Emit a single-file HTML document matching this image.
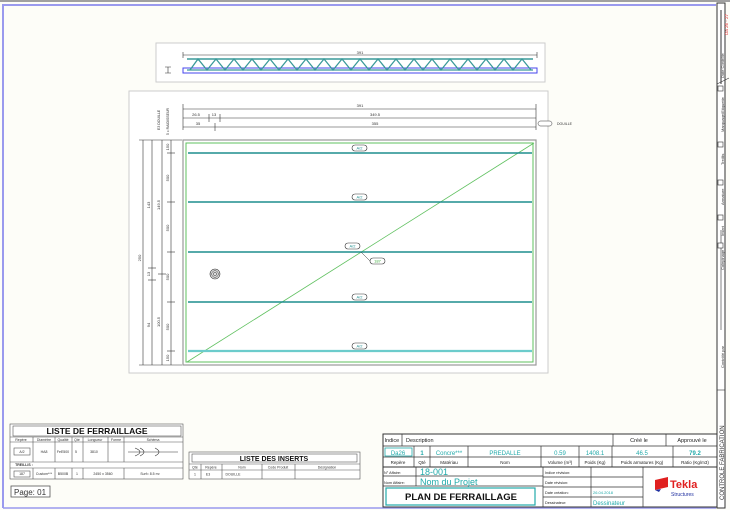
<!DOCTYPE html>
<html><head><meta charset="utf-8"><style>
html,body{margin:0;padding:0;background:#fdfdf8;}
svg{display:block;font-family:"Liberation Sans",sans-serif;}
</style></head><body>
<svg width="730" height="510" viewBox="0 0 730 510" xmlns="http://www.w3.org/2000/svg">
<rect x="0" y="0" width="730" height="510" fill="#fdfdf8"/>
<rect x="0" y="0" width="730" height="2" fill="#a0a0a0"/>
<!-- page frame -->
<path d="M3 508 V5 H716" fill="none" stroke="#9a9aee" stroke-width="2"/>
<line x1="3" y1="508" x2="716" y2="508" stroke="#9a9aee" stroke-width="1.5"/>
<!-- right strip -->
<rect x="717" y="3" width="8" height="505" fill="#fff" stroke="#333" stroke-width="1"/>
<line x1="721" y1="10" x2="721" y2="84" stroke="#999" stroke-width="2"/>
<line x1="721" y1="230" x2="721" y2="330" stroke="#aaa" stroke-width="1.5"/>
<line x1="717" y1="84" x2="729" y2="78" stroke="#333" stroke-width="0.6"/>
<text transform="translate(728,35) rotate(-90)" font-size="4.5" fill="#e03030">Da 26 - 27</text>
<g font-size="4" fill="#333">
<text transform="translate(724,78) rotate(-90)">Date Contrôle</text>
<text transform="translate(724,132) rotate(-90)">Marquage/Etiquette</text>
<text transform="translate(724,165) rotate(-90)">Treillis</text>
<text transform="translate(724,205) rotate(-90)">Armature</text>
<text transform="translate(724,236) rotate(-90)">Insert</text>
<text transform="translate(724,270) rotate(-90)">Calepinage</text>
<text transform="translate(724,368) rotate(-90)">Contrôlé par</text>
<text transform="translate(724,500) rotate(-90)" font-size="6">CONTROLE FABRICATION</text>
</g>
<g fill="#fff" stroke="#333" stroke-width="0.6">
<rect x="718" y="86" width="5" height="5"/><rect x="718" y="142" width="5" height="5"/><rect x="718" y="180" width="5" height="5"/><rect x="718" y="215" width="5" height="5"/><rect x="718" y="243" width="5" height="5"/>
</g>
<line x1="717" y1="390" x2="725" y2="390" stroke="#333" stroke-width="0.6"/>

<!-- top truss panel -->
<rect x="156" y="43" width="389" height="39" fill="#fff" stroke="#ccc" stroke-width="1"/>
<line x1="183" y1="55" x2="537" y2="55" stroke="#333" stroke-width="0.6"/>
<line x1="183" y1="52" x2="183" y2="58" stroke="#333" stroke-width="0.6"/>
<line x1="537" y1="52" x2="537" y2="58" stroke="#333" stroke-width="0.6"/>
<text x="360" y="54" font-size="4" text-anchor="middle" fill="#333">391</text>
<rect x="183" y="68" width="354" height="5" fill="none" stroke="#4444ee" stroke-width="1"/>
<line x1="187" y1="59" x2="533" y2="59" stroke="#3a9a9a" stroke-width="1.5"/>
<line x1="187" y1="70" x2="533" y2="70" stroke="#3a9a9a" stroke-width="1.2"/>
<path d="M190 70 L198 59 L207 70 L216 59 L225 70 L234 59 L243 70 L252 59 L261 70 L270 59 L279 70 L288 59 L297 70 L306 59 L315 70 L324 59 L333 70 L342 59 L351 70 L360 59 L369 70 L378 59 L387 70 L396 59 L405 70 L414 59 L423 70 L432 59 L441 70 L450 59 L459 70 L468 59 L477 70 L486 59 L495 70 L504 59 L513 70 L522 59 L531 70" fill="none" stroke="#3a9a9a" stroke-width="1.3"/>
<path d="M165 67 H171 M168 67 V73 M165 73 H171" stroke="#333" stroke-width="0.6" fill="none"/>

<!-- main panel -->
<rect x="129" y="91" width="419" height="282" fill="#fff" stroke="#ccc" stroke-width="1"/>
<g stroke="#333" stroke-width="0.6" fill="none">
<line x1="183" y1="109" x2="536" y2="109"/>
<line x1="183" y1="118" x2="536" y2="118"/>
<line x1="183" y1="127" x2="536" y2="127"/>
<line x1="183" y1="104" x2="183" y2="130"/>
<line x1="536" y1="104" x2="536" y2="130"/>
<line x1="209" y1="114" x2="209" y2="122"/>
<line x1="220" y1="114" x2="220" y2="122"/>
<line x1="215" y1="123" x2="215" y2="131"/>
<line x1="143" y1="140" x2="143" y2="365"/>
<line x1="152" y1="140" x2="152" y2="365"/>
<line x1="162" y1="140" x2="162" y2="365"/>
<line x1="171" y1="140" x2="171" y2="365"/>
<line x1="139" y1="140" x2="182" y2="140"/>
<line x1="139" y1="365" x2="182" y2="365"/>
<line x1="148" y1="268" x2="156" y2="268"/>
<line x1="148" y1="280" x2="156" y2="280"/>
<line x1="158" y1="274" x2="166" y2="274"/>
<line x1="167" y1="153" x2="175" y2="153"/>
<line x1="167" y1="202" x2="175" y2="202"/>
<line x1="167" y1="252" x2="175" y2="252"/>
<line x1="167" y1="302" x2="175" y2="302"/>
<line x1="167" y1="351" x2="175" y2="351"/>
</g>
<g font-size="4" fill="#333">
<text x="360" y="107" text-anchor="middle">391</text>
<text x="196" y="116" text-anchor="middle">26.5</text>
<text x="214" y="116" text-anchor="middle">13</text>
<text x="375" y="116" text-anchor="middle">349.5</text>
<text x="198" y="125" text-anchor="middle">35</text>
<text x="375" y="125" text-anchor="middle">355</text>
<text transform="translate(141,258) rotate(-90)" text-anchor="middle">250</text>
<text transform="translate(150,205) rotate(-90)" text-anchor="middle">143</text>
<text transform="translate(150,325) rotate(-90)" text-anchor="middle">94</text>
<text transform="translate(150,274) rotate(-90)" text-anchor="middle">13</text>
<text transform="translate(160,205) rotate(-90)" text-anchor="middle">149.5</text>
<text transform="translate(160,322) rotate(-90)" text-anchor="middle">100.5</text>
<text transform="translate(169,147) rotate(-90)" text-anchor="middle">150</text>
<text transform="translate(169,178) rotate(-90)" text-anchor="middle">500</text>
<text transform="translate(169,228) rotate(-90)" text-anchor="middle">500</text>
<text transform="translate(169,277) rotate(-90)" text-anchor="middle">500</text>
<text transform="translate(169,327) rotate(-90)" text-anchor="middle">500</text>
<text transform="translate(169,358) rotate(-90)" text-anchor="middle">150</text>
<text transform="translate(169,135) rotate(-90)" font-size="3.5">5 x RAIDISSEUR</text>
<text transform="translate(160,130) rotate(-90)" font-size="3.5">E3 DOUILLE</text>
</g>
<rect x="538" y="121" width="14" height="5" rx="2.5" fill="#fff" stroke="#333" stroke-width="0.5"/>
<text x="557" y="125" font-size="3.5" fill="#333">DOUILLE</text>
<!-- slab -->
<rect x="183" y="140" width="353" height="225" fill="#fff" stroke="#999" stroke-width="1.2"/>
<rect x="186" y="143" width="347" height="219" fill="none" stroke="#5fc05f" stroke-width="1"/>
<line x1="187" y1="362" x2="534" y2="143" stroke="#5fc05f" stroke-width="0.8"/>
<g stroke="#1e8e8e" stroke-width="1.4">
<line x1="188" y1="153" x2="532" y2="153"/>
<line x1="188" y1="202" x2="532" y2="202"/>
<line x1="188" y1="252" x2="532" y2="252"/>
<line x1="188" y1="302" x2="532" y2="302"/>
<line x1="188" y1="351" x2="532" y2="351" stroke="#6ccccc" stroke-width="2.2"/>
</g>
<g fill="#fff" stroke="#333" stroke-width="0.6">
<rect x="352" y="145" width="15" height="6" rx="3"/>
<rect x="352" y="194" width="15" height="6" rx="3"/>
<rect x="345" y="243" width="15" height="6" rx="3"/>
<rect x="352" y="294" width="15" height="6" rx="3"/>
<rect x="352" y="343" width="15" height="6" rx="3"/>
<rect x="370" y="258" width="15" height="6" rx="3"/>
</g>
<line x1="361" y1="252" x2="370" y2="261" stroke="#333" stroke-width="0.5"/>
<g font-size="4" fill="#1e8e8e" text-anchor="middle">
<text x="359.5" y="149.5">A/2</text><text x="359.5" y="198.5">A/2</text><text x="352.5" y="247.5">A/2</text><text x="359.5" y="298.5">A/2</text><text x="359.5" y="347.5">A/2</text>
<text x="377.5" y="262.5" fill="#3aaa3a">187</text>
</g>
<circle cx="215" cy="274" r="5" fill="#ddd" stroke="#333" stroke-width="0.6"/>
<circle cx="215" cy="274" r="3.3" fill="none" stroke="#333" stroke-width="0.5"/>
<circle cx="215" cy="274" r="1.6" fill="none" stroke="#333" stroke-width="0.5"/>

<!-- LISTE DE FERRAILLAGE -->
<g stroke="#555" stroke-width="0.6" fill="none">
<rect x="10" y="424" width="173" height="55" fill="#fff"/>
<rect x="13" y="426" width="168" height="10"/>
<line x1="10" y1="437" x2="183" y2="437"/>
<line x1="10" y1="442" x2="183" y2="442"/>
<line x1="10" y1="462" x2="183" y2="462"/>
<line x1="10" y1="468" x2="183" y2="468"/>
<path d="M33 437 V462 M55 437 V462 M72 437 V462 M83 437 V462 M108 437 V462 M124 437 V462 M33 468 V479 M55 468 V479 M72 468 V479 M83 468 V479 M124 468 V479"/>
<rect x="14" y="448" width="16" height="7"/>
<rect x="14" y="471" width="16" height="6"/>
<path d="M128 452 H178 M140 448 Q148 452 140 456 M155 448 Q163 452 155 456 M135 448 Q145 452 135 456" stroke="#333"/>
</g>
<text x="97" y="434" font-size="8.5" font-weight="bold" text-anchor="middle" fill="#111">LISTE DE FERRAILLAGE</text>
<g font-size="3.5" fill="#333" text-anchor="middle">
<text x="21" y="441">Repère</text><text x="44" y="441">Diamètre</text><text x="63" y="441">Qualité</text><text x="77" y="441">Qté</text><text x="95" y="441">Longueur</text><text x="116" y="441">Forme</text><text x="153" y="441">Schéma</text>
<text x="22" y="453">A/2</text><text x="44" y="453">HA8</text><text x="63" y="453">FeE500</text><text x="76" y="453">5</text><text x="94" y="453">3810</text>
<text x="24" y="466" font-weight="bold">TREILLIS :</text>
<text x="22" y="475">187</text><text x="44" y="475">Custom***</text><text x="63" y="475">B500B</text><text x="77" y="475">1</text><text x="103" y="475">2450  x  3560</text><text x="150" y="475">Surf=     8.5  m²</text>
</g>
<rect x="11" y="486" width="39" height="11" fill="#fff" stroke="#555" stroke-width="0.8"/>
<text x="14" y="495" font-size="8" fill="#333">Page:  01</text>

<!-- LISTE DES INSERTS -->
<g stroke="#555" stroke-width="0.6" fill="none">
<rect x="189" y="452" width="171" height="27" fill="#fff"/>
<rect x="192" y="454" width="165" height="8"/>
<line x1="189" y1="464" x2="360" y2="464"/>
<line x1="189" y1="470" x2="360" y2="470"/>
<path d="M201 464 V479 M222 464 V479 M262 464 V479 M295 464 V479"/>
</g>
<text x="274" y="461" font-size="7" font-weight="bold" text-anchor="middle" fill="#111">LISTE DES INSERTS</text>
<g font-size="3.5" fill="#333" text-anchor="middle">
<text x="195" y="468.5">Qté</text><text x="211" y="468.5">Repère</text><text x="242" y="468.5">Nom</text><text x="278" y="468.5">Code Produit</text><text x="327" y="468.5">Désignation</text>
<text x="195" y="475.5">1</text><text x="208" y="475.5">E3</text><text x="233" y="475.5">DOUILLE</text>
</g>

<!-- title block -->
<rect x="383" y="434" width="334" height="73" fill="#fff" stroke="#333" stroke-width="1"/>
<g stroke="#333" stroke-width="0.7" fill="none">
<line x1="383" y1="446" x2="717" y2="446"/>
<line x1="383" y1="457" x2="717" y2="457"/>
<line x1="383" y1="467" x2="717" y2="467" stroke-width="1"/>
<path d="M402 434 V446 M613 434 V446 M666 434 V446"/>
<path d="M414 446 V467 M430 446 V467 M468 446 V467 M541 446 V467 M579 446 V467 M612 446 V467 M673 446 V467"/>
<path d="M543 467 V507 M643 467 V507 M591 467 V507"/>
<path d="M543 477 H643 M543 487 H643 M543 497 H643"/>
<path d="M383 476 H543 M383 486 H543"/>
<path d="M416 467 V486"/>
</g>
<rect x="385" y="448" width="27" height="8" fill="none" stroke="#2aa" stroke-width="0.8"/>
<rect x="386" y="488" width="149" height="17" fill="none" stroke="#2aa" stroke-width="1.2"/>
<g font-size="5.5" fill="#222">
<text x="384.5" y="442">Indice</text><text x="406" y="442">Description</text>
<text x="639" y="442" text-anchor="middle">Créé le</text><text x="692" y="442" text-anchor="middle">Approuvé le</text>
</g>
<g font-size="6" fill="#2aa" text-anchor="middle">
<text x="398" y="455">Da26</text><text x="422" y="455" font-weight="bold">1</text><text x="449" y="455">Concre***</text><text x="505" y="455">PREDALLE</text><text x="560" y="455">0.59</text><text x="595" y="455">1408.1</text><text x="642" y="455">46.5</text><text x="695" y="455" font-weight="bold">79.2</text>
</g>
<g font-size="4.5" fill="#222" text-anchor="middle">
<text x="398" y="464">Repère</text><text x="422" y="464">Qté</text><text x="449" y="464">Matériau</text><text x="505" y="464">Nom</text><text x="560" y="464">Volume (m³)</text><text x="595" y="464">Poids (Kg)</text><text x="642" y="464">Poids armatures (Kg)</text><text x="695" y="464">Ratio (Kg/m3)</text>
</g>
<g font-size="3.8" fill="#222">
<text x="384" y="474">N° Affaire:</text><text x="384" y="484">Nom Affaire:</text>
<text x="545" y="474">Indice révision:</text><text x="545" y="484">Date révision:</text><text x="545" y="494">Date création:</text><text x="545" y="504">Dessinateur:</text>
</g>
<text x="420" y="475" font-size="9" fill="#2aa">18-001</text>
<text x="420" y="485" font-size="9" fill="#2aa">Nom du Projet</text>
<text x="593" y="494" font-size="4" fill="#2aa">26.04.2018</text>
<text x="593" y="505" font-size="6" fill="#2aa">Dessinateur</text>
<text x="461" y="500" font-size="9.5" font-weight="bold" text-anchor="middle" fill="#111">PLAN DE FERRAILLAGE</text>
<!-- Tekla -->
<path d="M655 480 L668 477 L668 487 L655 490 Z" fill="#e02020"/>
<path d="M655 490 L661 489 L659 492 Z" fill="#2030a0"/>
<text x="670" y="488" font-size="11" font-weight="bold" fill="#e02020">Tekla</text>
<text x="671" y="496" font-size="5" fill="#2030a0">Structures</text>
</svg>
</body></html>
